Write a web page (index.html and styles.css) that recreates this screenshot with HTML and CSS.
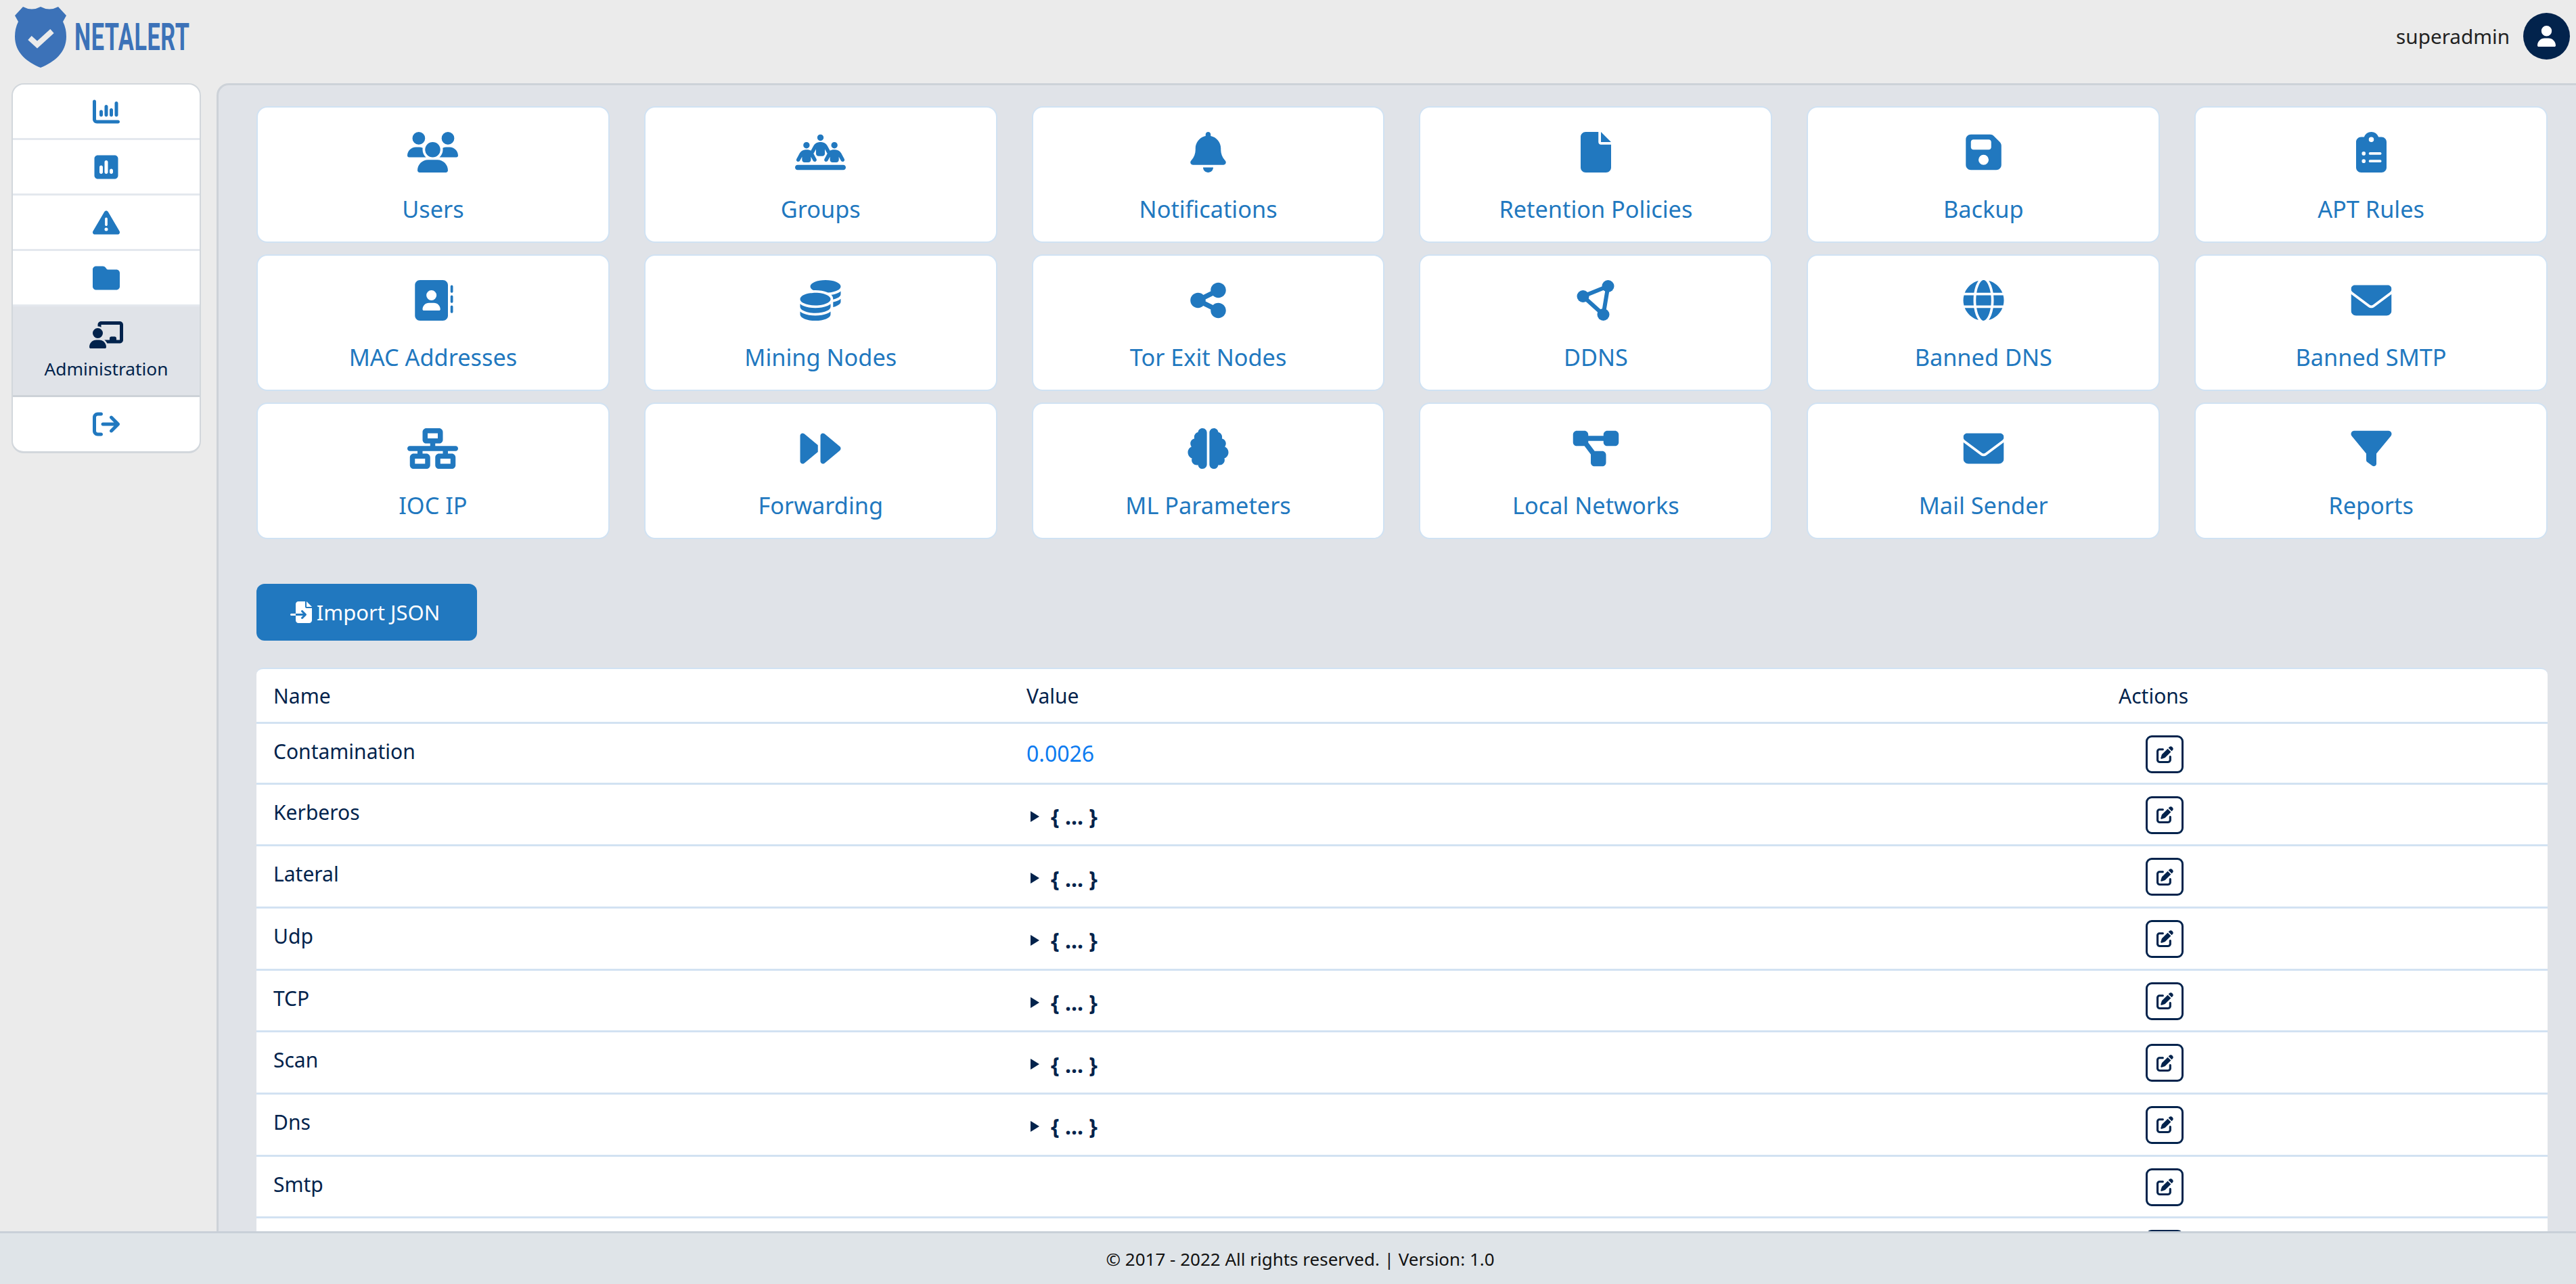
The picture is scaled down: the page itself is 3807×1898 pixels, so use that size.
FILE: index.html
```html
<!DOCTYPE html>
<html lang="en">
<head>
    <meta charset="UTF-8">
    <title>NetAlert - Administration</title>
    <link rel="stylesheet" href="styles.css">
</head>
<body>
    <svg class="defs" aria-hidden="true">
        <symbol id="i-edit" viewBox="0 0 512 512"><path d="M471.6 21.7c-21.9-21.9-57.3-21.9-79.2 0L362.3 51.7l97.9 97.9 30.1-30.1c21.9-21.9 21.9-57.3 0-79.2L471.6 21.7zm-299.2 220c-6.1 6.1-10.8 13.6-13.5 21.9l-29.6 88.8c-2.9 8.6-.6 18.1 5.8 24.6s15.9 8.7 24.6 5.8l88.8-29.6c8.2-2.7 15.7-7.4 21.9-13.5L437.7 172.3 339.7 74.3 172.4 241.7zM96 64C43 64 0 107 0 160V416c0 53 43 96 96 96H352c53 0 96-43 96-96V320c0-17.7-14.3-32-32-32s-32 14.3-32 32v96c0 17.7-14.3 32-32 32H96c-17.7 0-32-14.3-32-32V160c0-17.7 14.3-32 32-32h96c17.7 0 32-14.3 32-32s-14.3-32-32-32H96z"/></symbol>
        <symbol id="i-mail" viewBox="0 0 512 512"><path d="M48 64C21.5 64 0 85.5 0 112c0 15.1 7.1 29.3 19.2 38.4L236.8 313.6c11.4 8.5 27 8.5 38.4 0L492.8 150.4c12.1-9.1 19.2-23.3 19.2-38.4c0-26.5-21.5-48-48-48H48zM0 176V384c0 35.3 28.7 64 64 64H448c35.3 0 64-28.7 64-64V176L294.4 339.2c-22.8 17.1-54 17.1-76.8 0L0 176z"/></symbol>
    </svg>

    <header class="topbar">
        <div class="logo">
            <svg class="logo-shield" viewBox="0 0 76 90">
                <path d="M12 0Q25 7 38 0Q51 7 64 0L76 13L71 22Q76 32 76 44C76 68 58 82 38 90C18 82 0 68 0 44Q0 32 5 22L0 13Z"/>
                <path class="logo-check" d="M22 46L33 56L55 36"/>
            </svg>
            <span class="logo-text">NETALERT</span>
        </div>
        <div class="user">
            <span class="user-name">superadmin</span>
            <span class="avatar">
                <svg viewBox="0 0 448 512"><path d="M224 256A128 128 0 1 0 224 0a128 128 0 1 0 0 256zm-45.7 48C79.8 304 0 383.8 0 482.3C0 498.7 13.3 512 29.7 512H418.3c16.4 0 29.7-13.3 29.7-29.7C448 383.8 368.2 304 269.7 304H178.3z"/></svg>
            </span>
        </div>
    </header>

    <div class="layout">
        <div class="side-col">
            <nav class="sidebar">
                <a class="side-item" href="#"><svg viewBox="0 0 512 512"><path d="M32 32c17.7 0 32 14.3 32 32V400c0 8.8 7.2 16 16 16H480c17.7 0 32 14.3 32 32s-14.3 32-32 32H80c-44.2 0-80-35.8-80-80V64C0 46.3 14.3 32 32 32zM160 224c17.7 0 32 14.3 32 32v64c0 17.7-14.3 32-32 32s-32-14.3-32-32V256c0-17.7 14.3-32 32-32zm128-64V320c0 17.7-14.3 32-32 32s-32-14.3-32-32V160c0-17.7 14.3-32 32-32s32 14.3 32 32zm64 32c17.7 0 32 14.3 32 32v96c0 17.7-14.3 32-32 32s-32-14.3-32-32V224c0-17.7 14.3-32 32-32zM480 96V320c0 17.7-14.3 32-32 32s-32-14.3-32-32V96c0-17.7 14.3-32 32-32s32 14.3 32 32z"/></svg></a>
                <a class="side-item" href="#"><svg viewBox="0 0 448 512"><path d="M64 32C28.7 32 0 60.7 0 96V416c0 35.3 28.7 64 64 64H384c35.3 0 64-28.7 64-64V96c0-35.3-28.7-64-64-64H64zM128 224c17.7 0 32 14.3 32 32v96c0 17.7-14.3 32-32 32s-32-14.3-32-32V256c0-17.7 14.3-32 32-32zm64-64c0-17.7 14.3-32 32-32s32 14.3 32 32V352c0 17.7-14.3 32-32 32s-32-14.3-32-32V160zm128 128c17.7 0 32 14.3 32 32v32c0 17.7-14.3 32-32 32s-32-14.3-32-32V320c0-17.7 14.3-32 32-32z"/></svg></a>
                <a class="side-item" href="#"><svg viewBox="0 0 512 512"><path d="M256 32c14.2 0 27.3 7.5 34.5 19.8l216 368c7.3 12.4 7.3 27.7 .2 40.1S486.3 480 472 480H40c-14.3 0-27.6-7.7-34.7-20.1s-7-27.8 .2-40.1l216-368C228.7 39.5 241.8 32 256 32zm0 128c-13.3 0-24 10.7-24 24V296c0 13.3 10.7 24 24 24s24-10.7 24-24V184c0-13.3-10.7-24-24-24zm32 224a32 32 0 1 0 -64 0 32 32 0 1 0 64 0z"/></svg></a>
                <a class="side-item" href="#"><svg viewBox="0 0 512 512"><path d="M64 480H448c35.3 0 64-28.7 64-64V160c0-35.3-28.7-64-64-64H288c-10.1 0-19.6-4.7-25.6-12.8L243.2 57.6C231.1 41.5 212.1 32 192 32H64C28.7 32 0 60.7 0 96V416c0 35.3 28.7 64 64 64z"/></svg></a>
                <a class="side-item active" href="#"><svg viewBox="0 0 640 512"><path d="M160 64c0-35.3 28.7-64 64-64H576c35.3 0 64 28.7 64 64V352c0 35.3-28.7 64-64 64H336.8c-11.8-25.5-29.9-47.5-52.4-64H384V320c0-17.7 14.3-32 32-32h64c17.7 0 32 14.3 32 32v32h64V64L224 64v49.1C205.2 102.2 183.3 96 160 96V64zm0 64a96 96 0 1 1 0 192 96 96 0 1 1 0-192zM133.3 352h53.3C260.3 352 320 411.7 320 485.3c0 14.7-11.9 26.7-26.7 26.7H26.7C11.9 512 0 500.1 0 485.3C0 411.7 59.7 352 133.3 352z"/></svg><span>Administration</span></a>
                <a class="side-item" href="#"><svg viewBox="0 0 512 512"><path d="M502.6 278.6c12.5-12.5 12.5-32.8 0-45.3l-128-128c-12.5-12.5-32.8-12.5-45.3 0s-12.5 32.8 0 45.3L402.7 224 192 224c-17.7 0-32 14.3-32 32s14.3 32 32 32l210.7 0-73.4 73.4c-12.5 12.5-12.5 32.8 0 45.3s32.8 12.5 45.3 0l128-128zM160 96c17.7 0 32-14.3 32-32s-14.3-32-32-32L96 32C43 32 0 75 0 128L0 384c0 53 43 96 96 96l64 0c17.7 0 32-14.3 32-32s-14.3-32-32-32l-64 0c-17.7 0-32-14.3-32-32l0-256c0-17.7 14.3-32 32-32l64 0z"/></svg></a>
            </nav>
        </div>

        <main class="content">
            <div class="card-grid">
                <a class="card" href="#"><svg viewBox="0 0 640 512"><path d="M144 160A80 80 0 1 0 144 0a80 80 0 1 0 0 160zm368 0A80 80 0 1 0 512 0a80 80 0 1 0 0 160zM0 298.7C0 310.4 9.6 320 21.3 320H234.7c.2 0 .4 0 .7 0c-26.6-23.5-43.3-57.8-43.3-96c0-7.6 .7-15 1.9-22.3c-13.6-6.3-28.7-9.7-44.6-9.7H106.7C47.8 192 0 239.8 0 298.7zM405.3 320H618.7c11.8 0 21.3-9.6 21.3-21.3C640 239.8 592.2 192 533.3 192H490.7c-15.9 0-31 3.5-44.6 9.7c1.3 7.2 1.9 14.7 1.9 22.3c0 38.2-16.8 72.5-43.3 96c.2 0 .4 0 .7 0zM224 224a96 96 0 1 1 192 0 96 96 0 1 1 -192 0zM128 485.3C128 500.1 139.9 512 154.7 512H485.3c14.7 0 26.7-11.9 26.7-26.7C512 411.7 452.3 352 378.7 352H261.3C187.7 352 128 411.7 128 485.3z"/></svg><span>Users</span></a>
                <a class="card" href="#"><svg viewBox="0 0 640 512"><path d="M360 72a40 40 0 1 0 -80 0 40 40 0 1 0 80 0zM144 208a40 40 0 1 0 0-80 40 40 0 1 0 0 80zM32 416c-17.7 0-32 14.3-32 32s14.3 32 32 32H608c17.7 0 32-14.3 32-32s-14.3-32-32-32H32zM496 208a40 40 0 1 0 0-80 40 40 0 1 0 0 80zM200 313.5l26.9 49.9c6.3 11.7 20.8 16 32.5 9.7s16-20.8 9.7-32.5l-36.3-67.5c1.7-1.7 3.2-3.6 4.3-5.8L264 217.5V272c0 17.7 14.3 32 32 32h48c17.7 0 32-14.3 32-32V217.5l26.9 49.9c1.2 2.2 2.6 4.1 4.3 5.8l-36.3 67.5c-6.3 11.7-2 26.2 9.7 32.5s26.2 2 32.5-9.7L440 313.5V352c0 17.7 14.3 32 32 32h48c17.7 0 32-14.3 32-32V313.5l26.9 49.9c6.3 11.7 20.8 16 32.5 9.7s16-20.8 9.7-32.5l-37.9-70.3c-15.3-28.5-45.1-46.3-77.5-46.3H486.2c-16.3 0-31.9 4.5-45.4 12.6l-33.6-62.3c-15.3-28.5-45.1-46.3-77.5-46.3H310.6c-32.4 0-62.1 17.8-77.5 46.3l-33.6 62.3c-13.5-8.1-29.1-12.6-45.4-12.6H134.2c-32.4 0-62.1 17.8-77.5 46.3L18.9 340.6c-6.3 11.7-2 26.2 9.7 32.5s26.2 2 32.5-9.7L88 313.5V352c0 17.7 14.3 32 32 32h48c17.7 0 32-14.3 32-32V313.5z"/></svg><span>Groups</span></a>
                <a class="card" href="#"><svg viewBox="0 0 448 512"><path d="M224 0c-17.7 0-32 14.3-32 32V51.2C119 66 64 130.6 64 208v18.8c0 47-17.3 92.4-48.5 127.6l-7.4 8.3c-8.4 9.4-10.4 22.9-5.3 34.4S19.4 416 32 416H416c12.6 0 24-7.4 29.2-18.9s3.1-25-5.3-34.4l-7.4-8.3C401.3 319.2 384 273.9 384 226.8V208c0-77.4-55-142-128-156.8V32c0-17.7-14.3-32-32-32zm45.3 493.3c12-12 18.7-28.3 18.7-45.3H224 160c0 17 6.7 33.3 18.7 45.3s28.3 18.7 45.3 18.7s33.3-6.7 45.3-18.7z"/></svg><span>Notifications</span></a>
                <a class="card" href="#"><svg viewBox="0 0 384 512"><path d="M0 64C0 28.7 28.7 0 64 0H224V128c0 17.7 14.3 32 32 32H384V448c0 35.3-28.7 64-64 64H64c-35.3 0-64-28.7-64-64V64zm384 64H256V0L384 128z"/></svg><span>Retention Policies</span></a>
                <a class="card" href="#"><svg viewBox="0 0 448 512"><path d="M64 32C28.7 32 0 60.7 0 96V416c0 35.3 28.7 64 64 64H384c35.3 0 64-28.7 64-64V173.3c0-17-6.7-33.3-18.7-45.3L352 50.7C340 38.7 323.7 32 306.7 32H64zm0 96c0-17.7 14.3-32 32-32H288c17.7 0 32 14.3 32 32v64c0 17.7-14.3 32-32 32H96c-17.7 0-32-14.3-32-32V128zM224 288a64 64 0 1 1 0 128 64 64 0 1 1 0-128z"/></svg><span>Backup</span></a>
                <a class="card" href="#"><svg viewBox="0 0 384 512"><path d="M192 0c-41.8 0-77.4 26.7-90.5 64H64C28.7 64 0 92.7 0 128V448c0 35.3 28.7 64 64 64H320c35.3 0 64-28.7 64-64V128c0-35.3-28.7-64-64-64H282.5C269.4 26.7 233.8 0 192 0zm0 64a32 32 0 1 1 0 64 32 32 0 1 1 0-64zM72 272a24 24 0 1 1 48 0 24 24 0 1 1 -48 0zm104-16H304c8.8 0 16 7.2 16 16s-7.2 16-16 16H176c-8.8 0-16-7.2-16-16s7.2-16 16-16zM72 368a24 24 0 1 1 48 0 24 24 0 1 1 -48 0zm88 0c0-8.8 7.2-16 16-16H304c8.8 0 16 7.2 16 16s-7.2 16-16 16H176c-8.8 0-16-7.2-16-16z"/></svg><span>APT Rules</span></a>

                <a class="card" href="#"><svg viewBox="0 0 512 512"><path d="M96 0C60.7 0 32 28.7 32 64V448c0 35.3 28.7 64 64 64H384c35.3 0 64-28.7 64-64V64c0-35.3-28.7-64-64-64H96zM208 288h64c44.2 0 80 35.8 80 80c0 8.8-7.2 16-16 16H144c-8.8 0-16-7.2-16-16c0-44.2 35.8-80 80-80zm-32-96a64 64 0 1 1 128 0 64 64 0 1 1 -128 0zM512 80c0-8.8-7.2-16-16-16s-16 7.2-16 16v64c0 8.8 7.2 16 16 16s16-7.2 16-16V80zM496 192c-8.8 0-16 7.2-16 16v64c0 8.8 7.2 16 16 16s16-7.2 16-16V208c0-8.8-7.2-16-16-16zm16 144c0-8.8-7.2-16-16-16s-16 7.2-16 16v64c0 8.8 7.2 16 16 16s16-7.2 16-16V336z"/></svg><span>MAC Addresses</span></a>
                <a class="card" href="#"><svg viewBox="0 0 512 512"><path d="M512 80c0 18-14.3 34.6-38.4 48c-29.1 16.1-72.5 27.5-122.3 30.9c-3.7-1.8-7.4-3.5-11.3-5C300.6 137.4 248.2 128 192 128c-8.3 0-16.4 .2-24.5 .6l-1.1-.6C142.3 114.6 128 98 128 80c0-44.2 86-80 192-80S512 35.8 512 80zM160.7 161.1c10.2-.7 20.7-1.1 31.3-1.1c62.2 0 117.4 12.3 152.5 31.4C369.3 204.9 384 221.7 384 240c0 4-.7 7.9-2.1 11.7c-4.6 13.2-17 25.3-35 35.5c0 0 0 0 0 0c-.1 .1-.3 .1-.4 .2l0 0 0 0c-.3 .2-.6 .3-.9 .5c-35 19.4-90.8 32-153.6 32c-59.6 0-112.9-11.3-148.2-29.1c-1.9-.9-3.7-1.9-5.5-2.9C14.3 274.6 0 258 0 240c0-34.8 53.4-64.5 128-75.4c10.5-1.5 21.4-2.7 32.7-3.5zM416 240c0-21.9-10.6-39.9-24.1-53.4c28.3-4.4 54.2-11.4 76.2-20.5c16.3-6.8 31.5-15.2 43.9-25.5V176c0 19.3-16.5 37.1-43.8 50.9c-14.6 7.4-32.4 13.7-52.4 18.5c.1-1.8 .2-3.5 .2-5.3zm-32 96c0 18-14.3 34.6-38.4 48c-1.8 1-3.6 1.9-5.5 2.9C304.9 404.7 251.6 416 192 416c-62.8 0-118.6-12.6-153.6-32C14.3 370.6 0 354 0 336V300.6c12.5 10.3 27.6 18.7 43.9 25.5C83.4 342.6 135.8 352 192 352s108.6-9.4 148.1-25.9c7.8-3.2 15.3-6.9 22.4-10.9c6.1-3.4 11.8-7.2 17.2-11.2c1.5-1.1 2.9-2.3 4.3-3.4V304v5.7V336zm32 0V304 278.1c19-4.2 36.5-9.5 52.1-16c16.3-6.8 31.5-15.2 43.9-25.5V272c0 10.5-5 21-14.9 30.9c-16.3 16.3-45 29.7-81.3 38.4c.1-1.7 .2-3.5 .2-5.3zM192 448c56.2 0 108.6-9.4 148.1-25.9c16.3-6.8 31.5-15.2 43.9-25.5V432c0 44.2-86 80-192 80S0 476.2 0 432V396.6c12.5 10.3 27.6 18.7 43.9 25.5C83.4 438.6 135.8 448 192 448z"/></svg><span>Mining Nodes</span></a>
                <a class="card" href="#"><svg viewBox="0 0 448 512"><path d="M352 224c53 0 96-43 96-96s-43-96-96-96s-96 43-96 96c0 4 .2 8 .7 11.9l-94.1 47C145.4 170.2 121.9 160 96 160c-53 0-96 43-96 96s43 96 96 96c25.9 0 49.4-10.2 66.6-26.9l94.1 47c-.5 3.9-.7 7.8-.7 11.9c0 53 43 96 96 96s96-43 96-96s-43-96-96-96c-25.9 0-49.4 10.2-66.6 26.9l-94.1-47c.5-3.9 .7-7.8 .7-11.9s-.2-8-.7-11.9l94.1-47C302.6 213.8 326.1 224 352 224z"/></svg><span>Tor Exit Nodes</span></a>
                <a class="card" href="#"><svg viewBox="0 0 56 60"><path class="poly-line" d="M46 9L9 24L39 51Z"/><circle cx="46" cy="9" r="9"/><circle cx="9" cy="24" r="9"/><circle cx="39" cy="51" r="9"/></svg><span>DDNS</span></a>
                <a class="card" href="#"><svg viewBox="0 0 512 512"><path d="M352 256c0 22.2-1.2 43.6-3.3 64H163.3c-2.2-20.4-3.3-41.8-3.3-64s1.2-43.6 3.3-64H348.7c2.2 20.4 3.3 41.8 3.3 64zm28.8-64H503.9c5.3 20.5 8.1 41.9 8.1 64s-2.8 43.5-8.1 64H380.8c2.1-20.6 3.2-42 3.2-64s-1.1-43.4-3.2-64zm112.6-32H376.7c-10-63.9-29.8-117.4-55.3-151.6c78.3 20.7 142 77.5 171.9 151.6zm-149.1 0H167.7c6.1-36.4 15.5-68.6 27-94.7c10.5-23.6 22.2-40.7 33.5-51.5C239.4 3.2 248.7 0 256 0s16.6 3.2 27.8 13.8c11.3 10.8 23 27.9 33.5 51.5c11.6 26 20.9 58.2 27 94.7zm-209 0H18.6C48.6 85.9 112.2 29.1 190.6 8.4C165.1 42.6 145.3 96.1 135.3 160zM8.1 192H131.2c-2.1 20.6-3.2 42-3.2 64s1.1 43.4 3.2 64H8.1C2.8 299.5 0 278.1 0 256s2.8-43.5 8.1-64zM194.7 446.6c-11.6-26-20.9-58.2-27-94.6H344.3c-6.1 36.4-15.5 68.6-27 94.6c-10.5 23.6-22.2 40.7-33.5 51.5C272.6 508.8 263.3 512 256 512s-16.6-3.2-27.8-13.8c-11.3-10.8-23-27.9-33.5-51.5zM135.3 352c10 63.9 29.8 117.4 55.3 151.6C112.2 482.9 48.6 426.1 18.6 352H135.3zm358.1 0c-30 74.1-93.6 130.9-171.9 151.6c25.5-34.2 45.2-87.7 55.3-151.6H493.4z"/></svg><span>Banned DNS</span></a>
                <a class="card" href="#"><svg viewBox="0 0 512 512"><use href="#i-mail"/></svg><span>Banned SMTP</span></a>

                <a class="card" href="#"><svg viewBox="0 0 640 512"><path d="M256 64H384v64H256V64zM240 0c-26.5 0-48 21.5-48 48v96c0 26.5 21.5 48 48 48h48v32H32c-17.7 0-32 14.3-32 32s14.3 32 32 32h96v32H80c-26.5 0-48 21.5-48 48v96c0 26.5 21.5 48 48 48H240c26.5 0 48-21.5 48-48V368c0-26.5-21.5-48-48-48H192V288H448v32H400c-26.5 0-48 21.5-48 48v96c0 26.5 21.5 48 48 48H560c26.5 0 48-21.5 48-48V368c0-26.5-21.5-48-48-48H512V288h96c17.7 0 32-14.3 32-32s-14.3-32-32-32H352V192h48c26.5 0 48-21.5 48-48V48c0-26.5-21.5-48-48-48H240zM96 448V384H224v64H96zm320-64H544v64H416V384z"/></svg><span>IOC IP</span></a>
                <a class="card" href="#"><svg viewBox="0 0 512 512"><path d="M52.5 440.6c-9.5 7.9-22.8 9.7-34.1 4.4S0 428.4 0 416V96C0 83.6 7.2 72.3 18.4 67s24.5-3.6 34.1 4.4L224 214.3V256v41.7L52.5 440.6zM256 352V256 128 96c0-12.4 7.2-23.7 18.4-29s24.5-3.6 34.1 4.4l192 160c7.3 6.1 11.5 15.1 11.5 24.6s-4.2 18.5-11.5 24.6l-192 160c-9.5 7.9-22.8 9.7-34.1 4.4s-18.4-16.6-18.4-29V352z"/></svg><span>Forwarding</span></a>
                <a class="card" href="#"><svg viewBox="0 0 512 512"><path d="M184 0c30.9 0 56 25.1 56 56V456c0 30.9-25.1 56-56 56c-28.9 0-52.7-21.9-55.7-50.1c-5.2 1.4-10.7 2.1-16.3 2.1c-35.3 0-64-28.7-64-64c0-7.4 1.3-14.6 3.6-21.2C21.4 367.4 0 338.2 0 304c0-31.9 18.7-59.5 45.8-72.3C37.1 220.8 32 207 32 192c0-30.7 21.6-56.3 50.4-62.6C80.8 123.9 80 118 80 112c0-29.9 20.6-55.1 48.3-62.1C131.3 21.9 155.1 0 184 0zM328 0c28.9 0 52.6 21.9 55.7 49.9c27.8 7 48.3 32.1 48.3 62.1c0 6-.8 11.9-2.4 17.4c28.8 6.2 50.4 31.9 50.4 62.6c0 15-5.1 28.8-13.8 39.7C493.3 244.5 512 272.1 512 304c0 34.2-21.4 63.4-51.6 74.8c2.3 6.6 3.6 13.8 3.6 21.2c0 35.3-28.7 64-64 64c-5.6 0-11.1-.7-16.3-2.1c-3 28.2-26.8 50.1-55.7 50.1c-30.9 0-56-25.1-56-56V56c0-30.9 25.1-56 56-56z"/></svg><span>ML Parameters</span></a>
                <a class="card" href="#"><svg viewBox="0 0 576 512"><path d="M0 80C0 53.5 21.5 32 48 32h96c26.5 0 48 21.5 48 48V96H384V80c0-26.5 21.5-48 48-48h96c26.5 0 48 21.5 48 48v96c0 26.5-21.5 48-48 48H432c-26.5 0-48-21.5-48-48V160H192v16c0 1.7-.1 3.4-.3 5L272 288h96c26.5 0 48 21.5 48 48v96c0 26.5-21.5 48-48 48H272c-26.5 0-48-21.5-48-48V336c0-1.7 .1-3.4 .3-5L144 224H48c-26.5 0-48-21.5-48-48V80z"/></svg><span>Local Networks</span></a>
                <a class="card" href="#"><svg viewBox="0 0 512 512"><use href="#i-mail"/></svg><span>Mail Sender</span></a>
                <a class="card" href="#"><svg viewBox="0 0 512 512"><path d="M3.9 54.9C10.5 40.9 24.5 32 40 32H472c15.5 0 29.5 8.9 36.1 22.9s4.6 30.5-5.2 42.5L320 320.9V448c0 12.1-6.8 23.2-17.7 28.6s-23.8 4.3-33.5-3l-64-48c-8.1-6-12.8-15.5-12.8-25.6V320.9L9 97.3C-.7 85.4-2.8 68.8 3.9 54.9z"/></svg><span>Reports</span></a>
            </div>

            <button class="import-btn" type="button">
                <svg viewBox="0 0 512 512"><path d="M128 64c0-35.3 28.7-64 64-64H352V128c0 17.7 14.3 32 32 32H512V448c0 35.3-28.7 64-64 64H192c-35.3 0-64-28.7-64-64V336H302.1l-39 39c-9.4 9.4-9.4 24.6 0 33.9s24.6 9.4 33.9 0l80-80c9.4-9.4 9.4-24.6 0-33.9l-80-80c-9.4-9.4-24.6-9.4-33.9 0s-9.4 24.6 0 33.9l39 39H128V64zm0 224v48H24c-13.3 0-24-10.7-24-24s10.7-24 24-24H128zM512 128H384V0L512 128z"/></svg>
                Import JSON
            </button>

            <table class="settings">
                <colgroup>
                    <col class="col-name">
                    <col class="col-value">
                    <col>
                </colgroup>
                <thead>
                    <tr><th>Name</th><th>Value</th><th>Actions</th></tr>
                </thead>
                <tbody>
                    <tr class="row-plain"><td>Contamination</td><td class="val"><span class="num">0.0026</span></td><td><button class="edit-btn" type="button"><svg><use href="#i-edit"/></svg></button></td></tr>
                    <tr><td>Kerberos</td><td class="val"><span class="tree">{ ... }</span></td><td><button class="edit-btn" type="button"><svg><use href="#i-edit"/></svg></button></td></tr>
                    <tr><td>Lateral</td><td class="val"><span class="tree">{ ... }</span></td><td><button class="edit-btn" type="button"><svg><use href="#i-edit"/></svg></button></td></tr>
                    <tr><td>Udp</td><td class="val"><span class="tree">{ ... }</span></td><td><button class="edit-btn" type="button"><svg><use href="#i-edit"/></svg></button></td></tr>
                    <tr><td>TCP</td><td class="val"><span class="tree">{ ... }</span></td><td><button class="edit-btn" type="button"><svg><use href="#i-edit"/></svg></button></td></tr>
                    <tr><td>Scan</td><td class="val"><span class="tree">{ ... }</span></td><td><button class="edit-btn" type="button"><svg><use href="#i-edit"/></svg></button></td></tr>
                    <tr><td>Dns</td><td class="val"><span class="tree">{ ... }</span></td><td><button class="edit-btn" type="button"><svg><use href="#i-edit"/></svg></button></td></tr>
                    <tr><td>Smtp</td><td class="val"></td><td><button class="edit-btn" type="button"><svg><use href="#i-edit"/></svg></button></td></tr>
                    <tr><td></td><td class="val"></td><td><button class="edit-btn" type="button"><svg><use href="#i-edit"/></svg></button></td></tr>
                </tbody>
            </table>
        </main>
    </div>

    <footer class="footer">© 2017 - 2022 All rights reserved. | Version: 1.0</footer>
</body>
</html>
```

FILE: styles.css
```css
* {
    box-sizing: border-box;
}

body {
    margin: 0;
    height: 100vh;
    display: flex;
    flex-direction: column;
    overflow: hidden;
    background-color: #ebebeb;
    color: #02234c;
    font-family: "Noto Sans", Arial, sans-serif;
    font-size: 30px;
}

a {
    color: inherit;
    text-decoration: none;
}

svg {
    fill: currentColor;
    display: block;
}

.defs {
    width: 0;
    height: 0;
    position: absolute;
}

/* top bar */
.topbar {
    height: 123px;
    flex: none;
    display: flex;
    justify-content: space-between;
    align-items: flex-start;
    padding: 10px 9px 0 22px;
}

.logo {
    display: flex;
    align-items: center;
    height: 90px;
}

.logo-shield {
    width: 76px;
    height: 90px;
    fill: #3c72b8;
}

.logo-check {
    fill: none;
    stroke: #ebebeb;
    stroke-width: 8;
}

.logo-text {
    margin-left: 12px;
    width: 168px;
    color: #3c72b8;
    font-family: "Roboto", Arial, sans-serif;
    font-weight: 700;
    font-size: 56px;
    letter-spacing: 1px;
    white-space: nowrap;
    transform: scaleX(0.61);
    transform-origin: left center;
}

.user {
    display: flex;
    align-items: center;
    gap: 20px;
    margin-top: 9px;
}

.user-name {
    color: #222;
    font-size: 29.7px;
}

.avatar {
    width: 69px;
    height: 69px;
    border-radius: 50%;
    background-color: #02234c;
    display: flex;
    align-items: center;
    justify-content: center;
    color: #fff;
}

.avatar svg {
    width: 27px;
    height: 31px;
}

/* sidebar */
.layout {
    flex: 1;
    min-height: 0;
    display: flex;
}

.side-col {
    width: 320px;
    flex: none;
    padding-left: 17px;
}

.sidebar {
    width: 280px;
    background-color: #fff;
    border: 2px solid #d2d7dc;
    border-bottom-width: 3px;
    border-radius: 18px;
    overflow: hidden;
}

.side-item {
    height: 82px;
    display: flex;
    flex-direction: column;
    align-items: center;
    justify-content: center;
    color: #2178bf;
    border-bottom: 3px solid #e4e8ee;
}

.side-item:last-child {
    height: 80px;
    border-bottom: none;
}

.side-item svg {
    height: 40px;
    width: 40px;
}

.side-item.active {
    height: 134px;
    background-color: #e0e3e8;
    color: #02234c;
    border-bottom-color: #cdd2d8;
}

.side-item.active svg {
    width: 50px;
}

.side-item.active span {
    margin-top: 12px;
    font-size: 26.3px;
    line-height: 36px;
}

/* main panel */
.content {
    flex: 1;
    min-width: 0;
    overflow: hidden;
    background-color: #e0e3e8;
    border-top: 3px solid #cdd2d8;
    border-left: 3px solid #cdd2d8;
    border-top-left-radius: 18px;
    padding: 31px 42px 0 56px;
}

.card-grid {
    display: grid;
    grid-template-columns: repeat(6, 1fr);
    gap: 17px 51px;
}

.card {
    height: 202px;
    background-color: #fff;
    border: 2px solid #d0e2f3;
    border-radius: 16px;
    display: flex;
    flex-direction: column;
    align-items: center;
    padding-top: 36px;
    color: #2178bf;
}

.card svg {
    height: 60px;
    width: 75px;
}

.poly-line {
    fill: none;
    stroke: currentColor;
    stroke-width: 6;
}

.card span {
    margin-top: 31px;
    font-size: 34.3px;
    line-height: 46px;
}

.import-btn {
    display: flex;
    align-items: center;
    justify-content: center;
    gap: 7px;
    width: 326px;
    height: 84px;
    margin: 66px 0 40px;
    padding: 0 5px 0 0;
    background-color: #2178bf;
    color: #fff;
    border: none;
    border-radius: 12px;
    font-family: inherit;
    font-size: 31px;
}

.import-btn svg {
    width: 32px;
    height: 32px;
}

/* settings table */
.settings {
    width: 100%;
    table-layout: fixed;
    border-collapse: separate;
    border-spacing: 0;
    background-color: #fff;
    border-top: 2px solid #d0e2f3;
    border-radius: 10px 10px 0 0;
}

.col-name {
    width: 1114px;
}

.col-value {
    width: 1614px;
}

.settings th {
    height: 81px;
    padding: 0 24px;
    text-align: left;
    font-weight: 400;
    border-bottom: 3px solid #d2e2f2;
}

.settings th:first-child,
.settings td:first-child {
    padding-left: 25px;
}

.settings td {
    height: 91.7px;
    padding: 20px 24px 0;
    vertical-align: top;
    line-height: 41px;
    border-bottom: 3px solid #d2e2f2;
}

.settings .row-plain td {
    height: 89.5px;
}

.settings td.val {
    padding-top: 23px;
}

.settings td:last-child {
    padding-top: 17px;
}

.num {
    color: #0d7bf0;
    font-size: 32px;
}

.tree {
    font-weight: 700;
    font-size: 32px;
    display: inline-flex;
    align-items: center;
}

.tree::before {
    content: "";
    width: 0;
    height: 0;
    margin: 0 17px 0 6px;
    border-left: 13px solid #02234c;
    border-top: 8px solid transparent;
    border-bottom: 8px solid transparent;
}

.edit-btn {
    display: flex;
    align-items: center;
    justify-content: center;
    width: 56px;
    height: 56px;
    margin: 0 0 0 40px;
    padding: 0;
    background: none;
    border: 3px solid #02234c;
    border-radius: 9px;
    color: #02234c;
}

.edit-btn svg {
    width: 25px;
    height: 25px;
}

/* footer */
.footer {
    height: 78px;
    flex: none;
    display: flex;
    align-items: center;
    justify-content: center;
    padding-left: 36px;
    background-color: #dfe4e8;
    border-top: 3px solid #c9d0d8;
    color: #111;
    font-size: 26px;
}
```
